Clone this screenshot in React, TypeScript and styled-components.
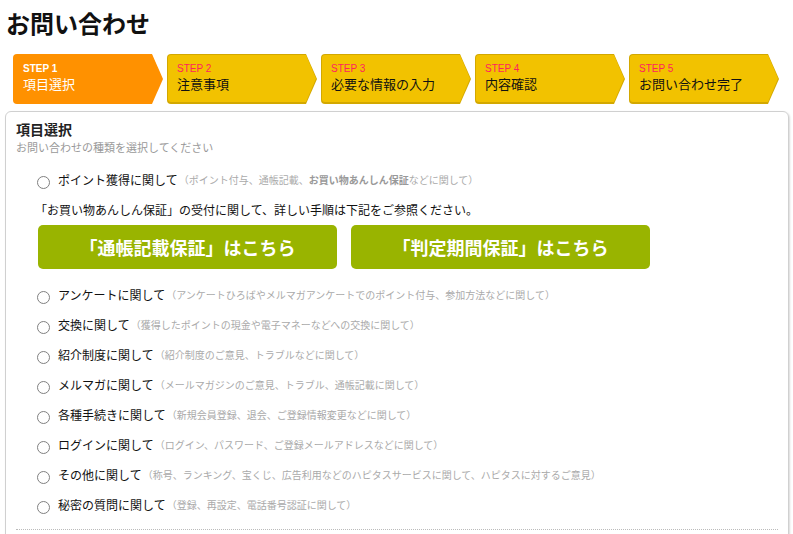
import React from "react";
import styled, { createGlobalStyle } from "styled-components";

const GlobalStyle = createGlobalStyle`
  html, body { margin: 0; padding: 0; background: #fff; }
  body {
    font-family: "Noto Sans CJK JP", "Noto Sans", sans-serif;
    color: #000;
  }
  * { box-sizing: border-box; }
`;

const Page = styled.div`
  padding: 6px 4px 0 5px;
`;

const Title = styled.h1`
  margin: 0;
  padding-left: 1px;
  font-size: 24px;
  font-weight: bold;
  line-height: 34px;
  color: #111;
`;

const Steps = styled.ol`
  display: flex;
  gap: 4px;
  margin: 14px 0 0 0;
  padding: 0 0 0 8px;
  list-style: none;
`;

const StepFrame = styled.li<{ $active?: boolean }>`
  width: 150px;
  height: 50px;
  padding: 1px 1px 2px 1px;
  background: ${(p) => (p.$active ? "#ff9100" : "#d3a800")};
  border-radius: 4px 0 0 4px;
  clip-path: polygon(0 0, 139px 0, 150px 25px, 139px 50px, 0 50px);
`;

const StepBody = styled.div<{ $active?: boolean }>`
  height: 100%;
  padding: 8px 0 0 9px;
  background: ${(p) => (p.$active ? "#ff9100" : "#f2c200")};
  border-radius: 3px 0 0 3px;
  clip-path: polygon(0 0, 138px 0, 148px 23.5px, 138px 47px, 0 47px);
`;

const StepNo = styled.div<{ $active?: boolean }>`
  font-family: "Liberation Sans", Arial, sans-serif;
  font-size: 10px;
  font-weight: ${(p) => (p.$active ? "bold" : "normal")};
  line-height: 12px;
  color: ${(p) => (p.$active ? "#fff" : "#ff1f5f")};
`;

const StepName = styled.div<{ $active?: boolean }>`
  font-size: 13px;
  line-height: 17px;
  color: ${(p) => (p.$active ? "#fff" : "#111")};
`;

const Panel = styled.section`
  margin-top: 7px;
  padding: 7px 10px 0 10px;
  border: 1px solid #d0d0d0;
  border-radius: 6px 6px 0 0;
  box-shadow: 1px 1px 2px rgba(0, 0, 0, 0.15);
  min-height: 440px;
`;

const Heading = styled.h2`
  margin: 0;
  font-size: 14px;
  font-weight: bold;
  line-height: 20px;
  color: #222;
`;

const Sub = styled.p`
  margin: 0;
  font-size: 11px;
  line-height: 16px;
  color: #999;
`;

const Options = styled.div`
  margin-top: 10px;
  padding-left: 21px;
`;

const Option = styled.label`
  display: flex;
  align-items: center;
  height: 30px;
  cursor: pointer;
`;

const Radio = styled.span`
  flex: none;
  width: 13px;
  height: 13px;
  margin-top: 5px;
  margin-right: 8px;
  border: 1px solid #808080;
  border-radius: 50%;
  background: #fff;
`;

const Label = styled.span`
  font-size: 12px;
  line-height: 20px;
  color: #111;
  white-space: nowrap;
`;

const Hint = styled.span`
  margin-left: 1px;
  font-size: 10px;
  line-height: 20px;
  color: #aaa;
  white-space: nowrap;
  b { font-weight: bold; color: #999; }
`;

const Note = styled.p`
  margin: 5px 0 0 -2px;
  font-size: 12px;
  line-height: 20px;
  color: #111;
`;

const Buttons = styled.div`
  display: flex;
  gap: 14px;
  margin: 5px 0 11px 1px;
`;

const GreenButton = styled.a`
  display: flex;
  align-items: center;
  justify-content: center;
  width: 299px;
  height: 44px;
  border-radius: 5px;
  background: #99b400;
  color: #fff;
  font-size: 18px;
  font-weight: bold;
  text-decoration: none;
`;

const Divider = styled.hr`
  margin: 9px 0 0 0;
  border: none;
  border-top: 1px dotted #bbb;
`;

const steps = [
  "項目選択",
  "注意事項",
  "必要な情報の入力",
  "内容確認",
  "お問い合わせ完了",
];

const options: { label: string; hint: React.ReactNode }[] = [
  { label: "アンケートに関して", hint: "（アンケートひろばやメルマガアンケートでのポイント付与、参加方法などに関して）" },
  { label: "交換に関して", hint: "（獲得したポイントの現金や電子マネーなどへの交換に関して）" },
  { label: "紹介制度に関して", hint: "（紹介制度のご意見、トラブルなどに関して）" },
  { label: "メルマガに関して", hint: "（メールマガジンのご意見、トラブル、通帳記載に関して）" },
  { label: "各種手続きに関して", hint: "（新規会員登録、退会、ご登録情報変更などに関して）" },
  { label: "ログインに関して", hint: "（ログイン、パスワード、ご登録メールアドレスなどに関して）" },
  { label: "その他に関して", hint: "（称号、ランキング、宝くじ、広告利用などのハピタスサービスに関して、ハピタスに対するご意見）" },
  { label: "秘密の質問に関して", hint: "（登録、再設定、電話番号認証に関して）" },
];

export default function App() {
  return (
    <>
      <GlobalStyle />
      <Page>
        <Title>お問い合わせ</Title>
        <Steps>
          {steps.map((s, i) => (
            <StepFrame key={s} $active={i === 0}>
              <StepBody $active={i === 0}>
                <StepNo $active={i === 0}>STEP {i + 1}</StepNo>
                <StepName $active={i === 0}>{s}</StepName>
              </StepBody>
            </StepFrame>
          ))}
        </Steps>
        <Panel>
          <Heading>項目選択</Heading>
          <Sub>お問い合わせの種類を選択してください</Sub>
          <Options>
            <Option>
              <Radio />
              <Label>ポイント獲得に関して</Label>
              <Hint>
                （ポイント付与、通帳記載、<b>お買い物あんしん保証</b>などに関して）
              </Hint>
            </Option>
            <Note>「お買い物あんしん保証」の受付に関して、詳しい手順は下記をご参照ください。</Note>
            <Buttons>
              <GreenButton href="#">「通帳記載保証」はこちら</GreenButton>
              <GreenButton href="#">「判定期間保証」はこちら</GreenButton>
            </Buttons>
            {options.map((o) => (
              <Option key={o.label}>
                <Radio />
                <Label>{o.label}</Label>
                <Hint>{o.hint}</Hint>
              </Option>
            ))}
          </Options>
          <Divider />
        </Panel>
      </Page>
    </>
  );
}
